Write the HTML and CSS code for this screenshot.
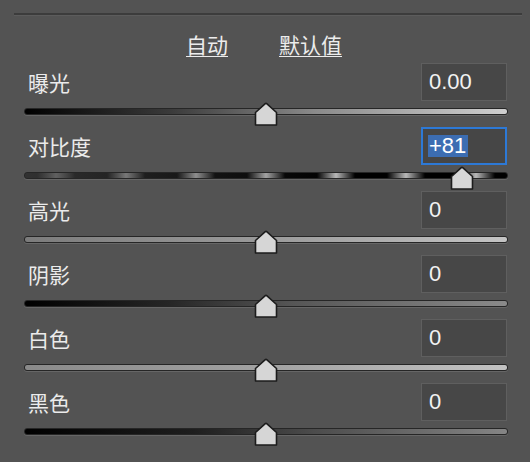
FILE: index.html
```html
<!DOCTYPE html>
<html lang="zh-CN">
<head>
<meta charset="utf-8">
<title>基本调整</title>
<link rel="stylesheet" href="styles.css">
</head>
<body>
<div class="rule"></div>
<div class="actions">
  <a class="action">自动</a>
  <a class="action">默认值</a>
</div>
<div class="rows">
  <div class="row">
    <div class="row-head"><span class="label">曝光</span><div class="field">0.00</div></div>
    <div class="slider"><div class="track t-exposure"></div><svg class="thumb" style="left:50%" viewBox="0 0 24 24" width="24" height="24"><path d="M1.5 10.5 L11 1.8 Q12 1 13 1.8 L22.5 10.5 L22.5 23 L1.5 23 Z"/></svg></div>
  </div>
  <div class="row">
    <div class="row-head"><span class="label">对比度</span><div class="field focused"><span class="sel">+81</span></div></div>
    <div class="slider"><div class="track t-contrast"></div><svg class="thumb" style="left:90.5%" viewBox="0 0 24 24" width="24" height="24"><path d="M1.5 10.5 L11 1.8 Q12 1 13 1.8 L22.5 10.5 L22.5 23 L1.5 23 Z"/></svg></div>
  </div>
  <div class="row">
    <div class="row-head"><span class="label">高光</span><div class="field">0</div></div>
    <div class="slider"><div class="track t-highlights"></div><svg class="thumb" style="left:50%" viewBox="0 0 24 24" width="24" height="24"><path d="M1.5 10.5 L11 1.8 Q12 1 13 1.8 L22.5 10.5 L22.5 23 L1.5 23 Z"/></svg></div>
  </div>
  <div class="row">
    <div class="row-head"><span class="label">阴影</span><div class="field">0</div></div>
    <div class="slider"><div class="track t-shadows"></div><svg class="thumb" style="left:50%" viewBox="0 0 24 24" width="24" height="24"><path d="M1.5 10.5 L11 1.8 Q12 1 13 1.8 L22.5 10.5 L22.5 23 L1.5 23 Z"/></svg></div>
  </div>
  <div class="row">
    <div class="row-head"><span class="label">白色</span><div class="field">0</div></div>
    <div class="slider"><div class="track t-whites"></div><svg class="thumb" style="left:50%" viewBox="0 0 24 24" width="24" height="24"><path d="M1.5 10.5 L11 1.8 Q12 1 13 1.8 L22.5 10.5 L22.5 23 L1.5 23 Z"/></svg></div>
  </div>
  <div class="row">
    <div class="row-head"><span class="label">黑色</span><div class="field">0</div></div>
    <div class="slider"><div class="track t-blacks"></div><svg class="thumb" style="left:50%" viewBox="0 0 24 24" width="24" height="24"><path d="M1.5 10.5 L11 1.8 Q12 1 13 1.8 L22.5 10.5 L22.5 23 L1.5 23 Z"/></svg></div>
  </div>
</div>
</body>
</html>
```
FILE: styles.css
```css
html, body {
  margin: 0;
  padding: 0;
}
body {
  width: 530px;
  height: 462px;
  overflow: hidden;
  background: #535353;
  color: #e8e8e8;
  font-family: "Noto Sans CJK SC", "Noto Sans", sans-serif;
}
.rule {
  margin: 13px 8px 0 14px;
  height: 2px;
  background: #3c3c3c;
  border-bottom: 1px solid #5c5c5c;
}
.actions {
  display: flex;
  justify-content: center;
  gap: 51px;
  margin-top: 14px;
  height: 28px;
  align-items: center;
  padding-right: 2px;
}
.action {
  font-size: 21px;
  line-height: 28px;
  color: #ececec;
  text-decoration: underline;
  text-underline-offset: 3px;
  text-decoration-thickness: 1px;
}
.rows {
  margin-top: 5px;
}
.row {
  height: 64px;
}
.row-head {
  height: 38px;
  display: flex;
  align-items: center;
  justify-content: space-between;
  padding: 0 23px 0 28px;
}
.label {
  font-size: 21px;
  line-height: 24px;
  color: #ebebeb;
  margin-top: -1px;
}
.field {
  box-sizing: border-box;
  width: 86px;
  height: 38px;
  background: #474747;
  border: 1px solid #5f5f5f;
  display: flex;
  align-items: center;
  padding-left: 7px;
  font-family: "Liberation Sans", Arial, sans-serif;
  font-size: 22px;
  color: #f2f2f2;
}
.field.focused {
  border: 2px solid #2d79d6;
  padding-left: 5px;
  background: #464646;
}
.sel {
  display: inline-block;
  background: #3c6db2;
  color: #ffffff;
  line-height: 22px;
  height: 22px;
  padding: 0 2px 0 1px;
}
.slider {
  position: relative;
  height: 26px;
  margin: 0 22px 0 24px;
}
.track {
  position: relative;
  top: 7px;
  height: 7px;
  box-sizing: border-box;
  border-radius: 3px;
  border: 1px solid #262626;
  box-shadow: 0 1px 0 #666666;
}
.t-exposure {
  background: linear-gradient(to right, #000 0%, #3a3a3a 30%, #8a8a8a 60%, #cfcfcf 100%);
}
.t-contrast {
  background:
    linear-gradient(to right, rgba(62,62,62,0.8) 0%, rgba(62,62,62,0.35) 35%, rgba(62,62,62,0) 65%),
    repeating-linear-gradient(to right, #000 0px, #000 12px, #b8b8b8 31px, #000 50px, #000 70px);
}
.t-highlights {
  background: linear-gradient(to right, #7c7c7c 0%, #9a9a9a 50%, #c4c4c4 100%);
}
.t-shadows {
  background: linear-gradient(to right, #000 0%, #262626 30%, #555 55%, #8a8a8a 100%);
}
.t-whites {
  background: linear-gradient(to right, #8a8a8a 0%, #a2a2a2 50%, #c2c2c2 100%);
}
.t-blacks {
  background: linear-gradient(to right, #000 0%, #1e1e1e 35%, #4c4c4c 60%, #858585 100%);
}
.thumb {
  position: absolute;
  top: 1px;
  transform: translateX(-50%);
  overflow: visible;
}
.thumb path {
  fill: #d6d6d6;
  stroke: #1c1c1c;
  stroke-width: 1.6;
  stroke-linejoin: round;
}
```
